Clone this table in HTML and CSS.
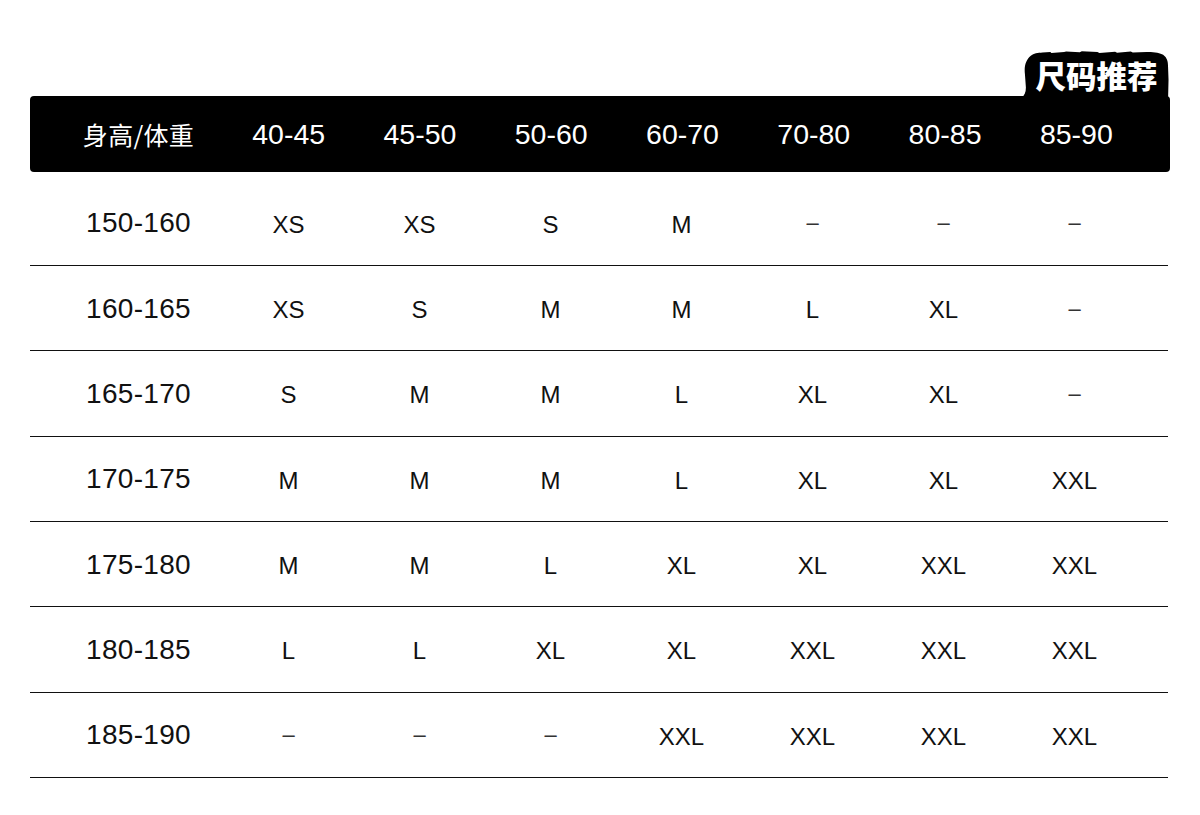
FILE: index.html
```html
<!DOCTYPE html>
<html lang="zh-CN">
<head>
<meta charset="utf-8">
<title>尺码推荐</title>
<link rel="stylesheet" href="styles.css">
</head>
<body>
<div class="page">
  <div class="badge">
    <svg class="badge-shape" viewBox="0 0 152 52" preserveAspectRatio="none" aria-hidden="true">
      <path d="M-2,50 C3,48 5,44 5,38 L4,24 C3,16 5,9 10,5 C13,2 17,2 22,1.5 L30,1 L31,2 L44,1 L46,0.5 L60,1.2 L62,0.3 L78,1 L80,2 L96,0.8 L98,1.8 L112,0.6 L114,1.6 L128,1 C136,0.8 142,2 145,4 C149,7 150,11 150,16 L150.5,30 L150,52 L-2,52 Z" fill="#000"/>
    </svg>
    <span class="badge-text">尺码推荐</span>
  </div>
  <div class="size-table">
    <div class="head-row">
      <div class="cell first cjk">身高/体重</div>
      <div class="cell">40-45</div>
      <div class="cell">45-50</div>
      <div class="cell">50-60</div>
      <div class="cell">60-70</div>
      <div class="cell">70-80</div>
      <div class="cell">80-85</div>
      <div class="cell">85-90</div>
    </div>
    <div class="body">
      <div class="row">
        <div class="cell first">150-160</div>
        <div class="cell">XS</div><div class="cell">XS</div><div class="cell">S</div><div class="cell">M</div>
        <div class="cell dash">–</div><div class="cell dash">–</div><div class="cell dash">–</div>
      </div>
      <div class="row">
        <div class="cell first">160-165</div>
        <div class="cell">XS</div><div class="cell">S</div><div class="cell">M</div><div class="cell">M</div>
        <div class="cell">L</div><div class="cell">XL</div><div class="cell dash">–</div>
      </div>
      <div class="row">
        <div class="cell first">165-170</div>
        <div class="cell">S</div><div class="cell">M</div><div class="cell">M</div><div class="cell">L</div>
        <div class="cell">XL</div><div class="cell">XL</div><div class="cell dash">–</div>
      </div>
      <div class="row">
        <div class="cell first">170-175</div>
        <div class="cell">M</div><div class="cell">M</div><div class="cell">M</div><div class="cell">L</div>
        <div class="cell">XL</div><div class="cell">XL</div><div class="cell">XXL</div>
      </div>
      <div class="row">
        <div class="cell first">175-180</div>
        <div class="cell">M</div><div class="cell">M</div><div class="cell">L</div><div class="cell">XL</div>
        <div class="cell">XL</div><div class="cell">XXL</div><div class="cell">XXL</div>
      </div>
      <div class="row">
        <div class="cell first">180-185</div>
        <div class="cell">L</div><div class="cell">L</div><div class="cell">XL</div><div class="cell">XL</div>
        <div class="cell">XXL</div><div class="cell">XXL</div><div class="cell">XXL</div>
      </div>
      <div class="row">
        <div class="cell first">185-190</div>
        <div class="cell dash">–</div><div class="cell dash">–</div><div class="cell dash">–</div><div class="cell">XXL</div>
        <div class="cell">XXL</div><div class="cell">XXL</div><div class="cell">XXL</div>
      </div>
    </div>
  </div>
</div>
</body>
</html>
```

FILE: styles.css
```css
html, body {
  margin: 0;
  padding: 0;
  background: #fff;
}

body {
  font-family: "Liberation Sans", Arial, "Noto Sans CJK SC", sans-serif;
  color: #111;
}

.page {
  position: relative;
  width: 1200px;
  height: 815px;
  padding: 96px 30px 0 30px;
  box-sizing: border-box;
}

.badge {
  position: absolute;
  top: 51px;
  right: 30px;
  width: 149px;
  height: 50px;
  display: flex;
  align-items: center;
  justify-content: center;
}

.badge-shape {
  position: absolute;
  left: 0;
  top: 0;
  width: 100%;
  height: 100%;
}

.badge-text {
  position: relative;
  font-family: "Noto Sans CJK SC", sans-serif;
  font-weight: 900;
  font-size: 30.5px;
  line-height: 1;
  color: #fff;
  margin-top: -2px;
  margin-left: 2px;
}

.size-table {
  width: 1140px;
}

.head-row,
.row {
  display: grid;
  grid-template-columns: 193px repeat(7, 1fr);
  padding-right: 28px;
  align-items: center;
}

.head-row {
  position: relative;
  height: 76px;
  background: #000;
  border-radius: 4px;
  color: #fff;
}

.head-row .cell {
  font-size: 28.5px;
  padding-top: 1px;
}

.head-row .cell.cjk {
  font-family: "Noto Sans CJK SC", sans-serif;
  font-size: 25px;
  padding-top: 0;
}

.cell {
  text-align: center;
  font-size: 24px;
  line-height: 1;
}

.row .cell {
  padding-top: 4px;
}

.row .cell.first {
  padding-top: 1px;
}

.cell.first {
  padding-left: 24px;
  font-size: 28px;
  letter-spacing: 0.3px;
}

.body {
  padding-top: 8.67px;
}

.row {
  height: 85.33px;
  box-sizing: border-box;
  border-bottom: 1.3px solid #111;
  margin-right: 2px;
}

.row .cell.dash {
  font-size: 22px;
  color: #333;
  padding-top: 1px;
}
```
